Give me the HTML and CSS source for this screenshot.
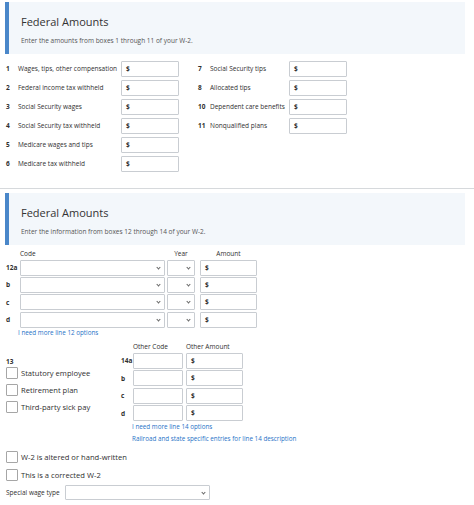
FILE: index.html
```html
<!DOCTYPE html>
<html>
<head>
  <title>W-2 Federal Amounts</title>
  <link rel="stylesheet" href="styles.css">
</head>
<body>
  <div class="page">
    <div class="panel">
      <h2>Federal Amounts</h2>
      <p>Enter the amounts from boxes 1 through 11 of your W-2.</p>
    </div>

    <div class="boxes">
      <div class="col col-left">
        <div class="row"><span class="num">1</span><span class="lbl">Wages, tips, other compensation</span><div class="money">$</div></div>
        <div class="row"><span class="num">2</span><span class="lbl">Federal income tax withheld</span><div class="money">$</div></div>
        <div class="row"><span class="num">3</span><span class="lbl">Social Security wages</span><div class="money">$</div></div>
        <div class="row"><span class="num">4</span><span class="lbl">Social Security tax withheld</span><div class="money">$</div></div>
        <div class="row"><span class="num">5</span><span class="lbl">Medicare wages and tips</span><div class="money">$</div></div>
        <div class="row"><span class="num">6</span><span class="lbl">Medicare tax withheld</span><div class="money">$</div></div>
      </div>
      <div class="col col-right">
        <div class="row"><span class="num">7</span><span class="lbl">Social Security tips</span><div class="money">$</div></div>
        <div class="row"><span class="num">8</span><span class="lbl">Allocated tips</span><div class="money">$</div></div>
        <div class="row"><span class="num">10</span><span class="lbl">Dependent care benefits</span><div class="money">$</div></div>
        <div class="row"><span class="num">11</span><span class="lbl">Nonqualified plans</span><div class="money">$</div></div>
      </div>
    </div>

    <hr class="sep">

    <div class="panel">
      <h2>Federal Amounts</h2>
      <p>Enter the information from boxes 12 through 14 of your W-2.</p>
    </div>

    <div class="box12">
      <div class="row12 head12">
        <span class="num"></span>
        <span class="code">Code</span>
        <span class="year">Year</span>
        <span class="amt">Amount</span>
      </div>
      <div class="row12"><span class="num">12a</span><div class="select code"></div><div class="select year"></div><div class="money amt">$</div></div>
      <div class="row12"><span class="num">b</span><div class="select code"></div><div class="select year"></div><div class="money amt">$</div></div>
      <div class="row12"><span class="num">c</span><div class="select code"></div><div class="select year"></div><div class="money amt">$</div></div>
      <div class="row12"><span class="num">d</span><div class="select code"></div><div class="select year"></div><div class="money amt">$</div></div>
      <a class="link link12" href="#">I need more line 12 options</a>
    </div>

    <div class="box1314">
      <div class="box13">
        <div class="num13">13</div>
        <label class="check"><span class="cb"></span>Statutory employee</label>
        <label class="check"><span class="cb"></span>Retirement plan</label>
        <label class="check"><span class="cb"></span>Third-party sick pay</label>
      </div>
      <div class="box14">
        <div class="row14 head14">
          <span class="num"></span>
          <span class="ocode">Other Code</span>
          <span class="oamt">Other Amount</span>
        </div>
        <div class="row14"><span class="num">14a</span><div class="text ocode"></div><div class="money oamt">$</div></div>
        <div class="row14"><span class="num">b</span><div class="text ocode"></div><div class="money oamt">$</div></div>
        <div class="row14"><span class="num">c</span><div class="text ocode"></div><div class="money oamt">$</div></div>
        <div class="row14"><span class="num">d</span><div class="text ocode"></div><div class="money oamt">$</div></div>
        <a class="link link14" href="#">I need more line 14 options</a>
        <a class="link link14b" href="#">Railroad and state specific entries for line 14 description</a>
      </div>
    </div>

    <div class="extras">
      <label class="check"><span class="cb"></span>W-2 is altered or hand-written</label>
      <label class="check"><span class="cb"></span>This is a corrected W-2</label>
      <div class="wage">
        <span class="wage-lbl">Special wage type</span>
        <div class="select wage-sel"></div>
      </div>
    </div>
  </div>
</body>
</html>
```

FILE: styles.css
```css
body {
  font-family: "Open Sans", Arial, sans-serif;
  margin: 0;
  color: #2f2f2f;
  font-size: 6.5px;
  background: #fff;
}
.page {
  padding: 2px 9px 0 5px;
}
.panel {
  background: #f3f7fb;
  border-left: 4px solid #4a87c9;
  height: 52px;
  box-sizing: border-box;
  padding: 13px 12px 0 12px;
}
.panel h2 {
  margin: 0;
  font-size: 11px;
  font-weight: 400;
  color: #333;
  line-height: 14px;
}
.panel p {
  margin: 7px 0 0;
  font-size: 6.5px;
  color: #555;
}

/* boxes 1-11 */
.boxes {
  display: flex;
  margin-top: 5px;
}
.col-left {
  width: 192px;
}
.row {
  display: flex;
  align-items: center;
  height: 19px;
}
.num {
  width: 12px;
  flex: none;
  padding-left: 1px;
  font-weight: 700;
  font-size: 6.5px;
}
.col-left .lbl {
  width: 103px;
}
.col-right .lbl {
  width: 79px;
}
.money, .text, .select {
  box-sizing: border-box;
  height: 16px;
  border: 1px solid #c9cdd2;
  border-radius: 1px;
  background: #fff;
}
.money {
  font-weight: 700;
  font-size: 6.5px;
  padding-left: 4px;
  line-height: 14px;
}
.boxes .money {
  width: 58px;
}
.sep {
  border: 0;
  border-top: 1px solid #d6d9dc;
  margin: 15px -9px 4px -5px;
}

/* box 12 */
.box12 {
  margin-top: 2px;
}
.row12 {
  display: flex;
  align-items: center;
  height: 17.3px;
  gap: 2px;
}
.head12 {
  height: 12px;
}
.row12 .code {
  width: 145px;
}
.row12 .year {
  width: 28px;
  text-align: center;
}
.row12 .amt {
  width: 57px;
  margin-left: 3px;
}
.head12 .amt {
  text-align: center;
}
.select {
  position: relative;
}
.select::after {
  content: "";
  position: absolute;
  right: 4px;
  top: 5px;
  width: 2px;
  height: 2px;
  border-right: 1px solid #666;
  border-bottom: 1px solid #666;
  transform: rotate(45deg);
}
.link {
  display: block;
  color: #1f73c7;
  text-decoration: none;
  font-size: 6.3px;
}
.link12 {
  margin: 0 0 0 13px;
}

/* box 13 / 14 */
.box1314 {
  display: flex;
  margin-top: 3px;
}
.box13 {
  width: 114px;
  padding-top: 17px;
  padding-left: 1px;
}
.num13 {
  font-weight: 700;
  font-size: 6.5px;
  height: 7px;
}
.check {
  display: flex;
  align-items: center;
  height: 17px;
  font-size: 7.6px;
}
.cb {
  width: 10px;
  height: 10px;
  border: 1px solid #a6a6a6;
  border-radius: 1px;
  margin-right: 3px;
}
.row14 {
  display: flex;
  align-items: center;
  height: 17.5px;
  gap: 3px;
}
.head14 {
  height: 12px;
}
.row14 .num {
  width: 9px;
}
.row14 .ocode {
  width: 50px;
}
.row14 .oamt {
  width: 57px;
}
.link14 {
  margin: 0 0 0 12px;
}
.link14b {
  margin: 3px 0 0 12px;
}

/* extras */
.extras {
  margin-top: 5px;
  padding-left: 1px;
}
.extras .check {
  height: 18px;
}
.wage {
  display: flex;
  align-items: center;
  height: 17px;
}
.wage-lbl {
  width: 59px;
}
.wage-sel {
  width: 145px;
  height: 15px;
}
```
